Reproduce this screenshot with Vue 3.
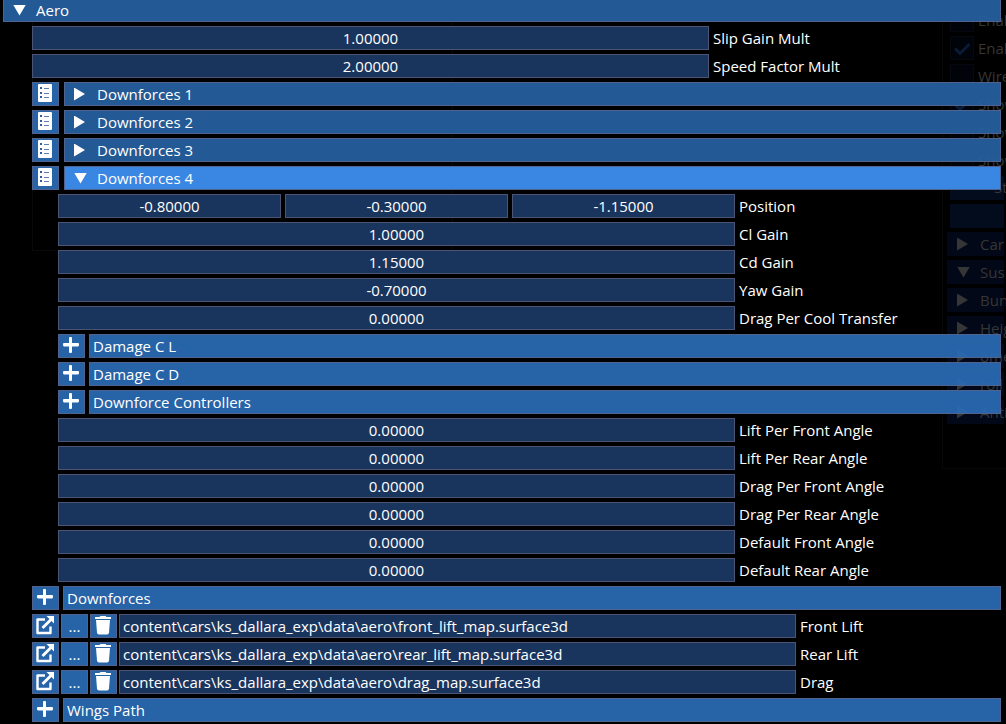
<template>
  <div class="editor">
    <!-- inactive windows behind the panel -->
    <div class="behind-left"></div>
    <div class="behind" aria-hidden="true">
      <div v-for="(item, i) in options" :key="'o' + i" class="behind-option">
        <span class="behind-box">
          <svg v-if="item.checked" viewBox="0 0 22 22"><path d="M4 11.500l5 5L18.500 7" /></svg>
        </span>
        <span>{{ item.label }}</span>
      </div>
      <div class="behind-button">St</div>
      <div class="behind-button"></div>
      <div v-for="item in sections" :key="item.label" class="behind-header">
        <span class="arrow" :class="{ open: item.open }"></span>
        <span>{{ item.label }}</span>
      </div>
    </div>

    <main class="panel">
      <button class="header top" type="button" aria-expanded="true">
        <span class="arrow open"></span>
        <span>Aero</span>
      </button>

      <div class="level">
        <div v-for="field in mults" :key="field.id" class="row">
          <input :id="field.id" v-model="field.value" class="field" type="text" />
          <label :for="field.id">{{ field.label }}</label>
        </div>

        <div v-for="n in 4" :key="n" class="row list-row">
          <button class="icon-btn" type="button" :aria-label="'Downforces ' + n + ' menu'">
            <svg viewBox="0 0 25 22">
              <rect x="5" y="1" width="14" height="18" rx="1" fill="#fff" />
              <g fill="#2f5f9f">
                <rect x="7" y="4" width="2" height="2" />
                <rect x="7" y="9" width="2" height="2" />
                <rect x="7" y="13" width="2" height="2" />
              </g>
              <path d="M11 5.500h5M11 10.500h5M11 14.500h5" stroke="#5b7fb5" stroke-width="1" />
            </svg>
          </button>
          <button
            class="header"
            :class="{ active: opened === n }"
            type="button"
            :aria-expanded="opened === n"
            @click="toggle(n)"
          >
            <span class="arrow" :class="{ open: opened === n }"></span>
            <span>Downforces {{ n }}</span>
          </button>
        </div>

        <div v-if="opened" class="level inner">
          <div class="row">
            <div class="vector" role="group" aria-labelledby="position-label">
              <input
                v-for="(axis, i) in position"
                :key="i"
                v-model="axis.value"
                type="text"
                :aria-label="axis.name"
              />
            </div>
            <span id="position-label">Position</span>
          </div>

          <div v-for="field in gains" :key="field.id" class="row">
            <input :id="field.id" v-model="field.value" class="field" type="text" />
            <label :for="field.id">{{ field.label }}</label>
          </div>

          <div v-for="name in ['Damage C L', 'Damage C D', 'Downforce Controllers']" :key="name" class="row">
            <button class="icon-btn" type="button" :aria-label="'Add ' + name">
              <svg viewBox="0 0 25 22"><path :d="plus" fill="#fff" /></svg>
            </button>
            <button class="bar" type="button">{{ name }}</button>
          </div>

          <div v-for="field in angles" :key="field.id" class="row">
            <input :id="field.id" v-model="field.value" class="field" type="text" />
            <label :for="field.id">{{ field.label }}</label>
          </div>
        </div>

        <div class="row">
          <button class="icon-btn" type="button" aria-label="Add Downforces">
            <svg viewBox="0 0 25 22"><path :d="plus" fill="#fff" /></svg>
          </button>
          <button class="bar" type="button">Downforces</button>
        </div>

        <div v-for="file in files" :key="file.id" class="row file-row">
          <button class="icon-btn" type="button" :aria-label="'Open ' + file.label">
            <svg viewBox="0 0 25 22" fill="none" stroke="#fff">
              <path d="M12 4.500H4.500v13.500h13v-6.500" stroke-width="2.400" stroke-linejoin="round" />
              <path d="M9.500 13L18.500 4" stroke-width="2.800" />
              <path d="M13.500 1H21v7.500z" fill="#fff" stroke="none" />
            </svg>
          </button>
          <button class="icon-btn dots" type="button" :aria-label="'Browse ' + file.label">...</button>
          <button class="icon-btn" type="button" :aria-label="'Delete ' + file.label">
            <svg viewBox="0 0 25 22" fill="#fff">
              <path d="M4 2h4.500l1-1h5l1 1H20v2H4z" />
              <path d="M5 5h14l-1 12.500q-.2 2-2 2H8q-1.800 0-2-2z" />
            </svg>
          </button>
          <input :id="file.id" v-model="file.path" class="field path" type="text" />
          <label :for="file.id">{{ file.label }}</label>
        </div>

        <div class="row">
          <button class="icon-btn" type="button" aria-label="Add Wings Path">
            <svg viewBox="0 0 25 22"><path :d="plus" fill="#fff" /></svg>
          </button>
          <button class="bar" type="button">Wings Path</button>
        </div>
      </div>
    </main>
  </div>
</template>

<script setup>
import { ref } from 'vue'

const plus = 'M10 3q0-1 1-1h1q1 0 1 1v5h6q1 0 1 1v1q0 1-1 1.500h-6v5.500q0 1-1 1h-1q-1 0-1-1v-5.500H5q-1-.5-1-1.500V9q0-1 1-1h5z'

const opened = ref(4)
const toggle = (n) => {
  opened.value = opened.value === n ? 0 : n
}

const mults = ref([
  { id: 'slip', label: 'Slip Gain Mult', value: '1.00000' },
  { id: 'speed', label: 'Speed Factor Mult', value: '2.00000' },
])

const position = ref([
  { name: 'X', value: '-0.80000' },
  { name: 'Y', value: '-0.30000' },
  { name: 'Z', value: '-1.15000' },
])

const gains = ref([
  { id: 'cl', label: 'Cl Gain', value: '1.00000' },
  { id: 'cd', label: 'Cd Gain', value: '1.15000' },
  { id: 'yaw', label: 'Yaw Gain', value: '-0.70000' },
  { id: 'cool', label: 'Drag Per Cool Transfer', value: '0.00000' },
])

const angles = ref([
  { id: 'lift-front', label: 'Lift Per Front Angle', value: '0.00000' },
  { id: 'lift-rear', label: 'Lift Per Rear Angle', value: '0.00000' },
  { id: 'drag-front', label: 'Drag Per Front Angle', value: '0.00000' },
  { id: 'drag-rear', label: 'Drag Per Rear Angle', value: '0.00000' },
  { id: 'def-front', label: 'Default Front Angle', value: '0.00000' },
  { id: 'def-rear', label: 'Default Rear Angle', value: '0.00000' },
])

const files = ref([
  { id: 'front-map', label: 'Front Lift', path: 'content\\cars\\ks_dallara_exp\\data\\aero\\front_lift_map.surface3d' },
  { id: 'rear-map', label: 'Rear Lift', path: 'content\\cars\\ks_dallara_exp\\data\\aero\\rear_lift_map.surface3d' },
  { id: 'drag-map', label: 'Drag', path: 'content\\cars\\ks_dallara_exp\\data\\aero\\drag_map.surface3d' },
])

const options = [
  { label: 'Enal' },
  { label: 'Enal', checked: true },
  { label: 'Wire' },
  { label: 'Show', checked: true },
  { label: 'Show' },
  { label: 'Show' },
]

const sections = [
  { label: 'Car' },
  { label: 'Sus', open: true },
  { label: 'Bun' },
  { label: 'Heig' },
  { label: 'ome' },
  { label: 'roll' },
  { label: 'Anti' },
]
</script>

<style>
body {
  margin: 0;
  background: #000;
}
</style>

<style scoped>
.editor {
  position: relative;
  min-height: 100vh;
  overflow: hidden;
  background: #000;
  color: #fff;
  font: 15px/22px "Open Sans", "Noto Sans", sans-serif;
  --field: calc(100vw - 329px);
}
button,
input {
  box-sizing: border-box;
  height: 24px;
  margin: 0;
  padding: 0;
  border: 1px solid #4b5473;
  border-radius: 0;
  color: #fff;
  font: inherit;
}
input {
  min-width: 0;
  background: #1a355d;
  text-align: center;
}
.panel {
  position: relative;
  padding: 0 5px 2px 3px;
}
.level {
  display: flex;
  flex-direction: column;
  gap: 4px;
  margin: 4px 0 0 29px;
}
.level.inner {
  margin: 0 0 0 26px;
}
.row {
  display: flex;
  align-items: center;
  gap: 4px;
  height: 24px;
  white-space: nowrap;
}
.list-row {
  gap: 5px;
}
.file-row {
  gap: 2px;
}
.file-row label {
  padding-left: 2px;
}
.field,
.vector {
  flex: none;
  width: var(--field);
}
.vector {
  display: flex;
  gap: 4px;
}
.vector input {
  flex: 1;
}
.path {
  padding: 0 3px;
  text-align: left;
}

/* collapsing headers */
.header {
  display: flex;
  flex: 1;
  align-items: center;
  background: rgba(38, 97, 162, 0.92);
  border-color: #50638f;
  text-align: left;
}
.header.active {
  background: rgba(59, 139, 234, 0.97);
}
.header.top {
  width: 100%;
  height: 22px;
  border-top: 0;
  padding-bottom: 1px;
}
.arrow {
  display: flex;
  flex: none;
  width: 32px;
}
.arrow::before {
  content: "";
  width: 11px;
  height: 13px;
  margin-left: 9px;
  background: currentColor;
  clip-path: polygon(0 0, 100% 50%, 0 100%);
}
.arrow.open::before {
  width: 13px;
  height: 11px;
  clip-path: polygon(0 0, 100% 0, 50% 100%);
}

/* buttons */
.icon-btn {
  flex: none;
  width: 27px;
  background: #2763a7;
  border-color: #50638f;
}
.icon-btn svg {
  display: block;
  width: 25px;
  height: 22px;
}
.bar {
  flex: 1;
  padding: 0 3px;
  background: rgba(42, 107, 181, 0.92);
  border-color: #50638f;
  text-align: left;
}

/* dimmed windows */
.behind {
  position: absolute;
  top: 0;
  right: 0;
  box-sizing: border-box;
  width: 64px;
  height: 469px;
  padding: 8px 0 0 4px;
  display: flex;
  flex-direction: column;
  gap: 4px;
  overflow: hidden;
  border: 1px solid #080808;
  border-width: 0 0 1px 1px;
  color: #363636;
  white-space: nowrap;
}
.behind-option,
.behind-header {
  display: flex;
  flex: none;
  align-items: center;
  height: 24px;
}
.behind-option {
  gap: 4px;
  margin-left: 3px;
}
.behind-box {
  flex: none;
  width: 22px;
  height: 22px;
  background: #01030a;
  border: 1px solid #06080e;
}
.behind-box svg {
  display: block;
  fill: none;
  stroke: #081c36;
  stroke-width: 3;
}
.behind-button {
  flex: none;
  box-sizing: border-box;
  height: 24px;
  margin: 0 2px 0 3px;
  padding-left: 44px;
  background: #020c1c;
}
.behind-header {
  margin-right: 2px;
  background: #020817;
}
.behind-header .arrow {
  width: 33px;
}
.behind-header .arrow::before {
  margin-left: 10px;
}
.behind-left {
  position: absolute;
  top: 0;
  left: 32px;
  width: 419px;
  height: 250px;
  border: 1px solid #090909;
  border-top: 0;
}
</style>
